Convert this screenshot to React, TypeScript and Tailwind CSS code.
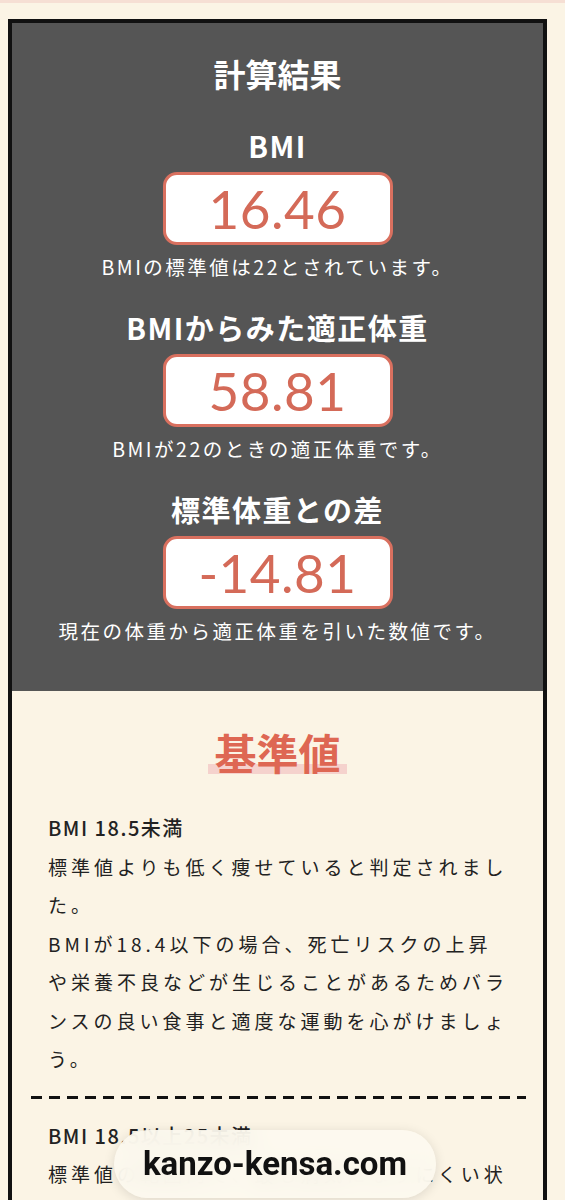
const jp = '[font-family:"Noto_Sans_CJK_JP","Noto_Sans",sans-serif]';

type Result = { title: string; value: string; note: string };

const results: Result[] = [
  { title: 'BMI', value: '16.46', note: 'BMIの標準値は22とされています。' },
  { title: 'BMIからみた適正体重', value: '58.81', note: 'BMIが22のときの適正体重です。' },
  { title: '標準体重との差', value: '-14.81', note: '現在の体重から適正体重を引いた数値です。' },
];

function ResultBlock({ r, first }: { r: Result; first: boolean }) {
  return (
    <div className={`flex flex-col items-center ${first ? 'mt-[29px]' : 'mt-[25px]'}`}>
      <h3 className="text-[29px] leading-[40px] font-bold tracking-[1.5px] text-white">{r.title}</h3>
      <div className="mt-[7px] flex h-[73px] w-[230px] items-center justify-center rounded-[14px] border-[3px] border-[#d9705f] bg-white">
        <span className="text-[53px] leading-none font-normal tracking-[0.5px] text-[#d46a58] [font-family:Lato,'Noto_Sans',sans-serif]">
          {r.value}
        </span>
      </div>
      <p className="mt-[7px] text-[19.5px] leading-[30px] tracking-[2.5px] text-white">{r.note}</p>
    </div>
  );
}

export default function App() {
  return (
    <div className={`min-h-screen bg-[#fbf4e5] ${jp}`}>
      <div className="h-[3px] bg-[#f6dfd4]" />
      <div className="mt-[16px] ml-[8px] mr-[18px] border-[4px] border-b-0 border-[#111]">
        {/* 計算結果 */}
        <section className="bg-[#555555] pt-[27px] pb-[45px]">
          <h2 className="text-center text-[32px] leading-[46px] font-bold text-white">計算結果</h2>
          {results.map((r, i) => (
            <ResultBlock key={r.title} r={r} first={i === 0} />
          ))}
        </section>

        {/* 基準値 */}
        <section className="bg-[#fbf4e5] pt-[34px] pb-[40px]">
          <div className="text-center">
            <span className="inline-block px-[6px] text-[42px] leading-[54px] font-bold text-[#de6753] bg-[linear-gradient(transparent_72%,#f5d2cd_72%,#f5d2cd_90%,transparent_90%)]">
              基準値
            </span>
          </div>

          <div className="mt-[30px] pl-[36px] pr-[30px] text-[19px] leading-[38.5px] tracking-[4px] text-[#222]">
            <p className="text-[20px] font-medium tracking-[1.5px]">BMI 18.5未満</p>
            <p>標準値よりも低く痩せていると判定されました。</p>
            <p>
              BMIが18.4以下の場合、死亡リスクの上昇や栄養不良などが生じることがあるためバランスの良い食事と適度な運動を心がけましょう。
            </p>
          </div>

          <div className="mt-[17px] ml-[19px] mr-[17px] h-[3px] bg-[repeating-linear-gradient(90deg,#111_0_11px,transparent_11px_18px)]" />

          <div className="mt-[18px] pl-[36px] pr-[30px] text-[19px] leading-[38.5px] tracking-[4px] text-[#222]">
            <p className="text-[20px] font-medium tracking-[1.5px]">BMI 18.5以上25未満</p>
            <p>標準値の範囲内で、最も病気になりにくい状態です。</p>
            <p>今の体重を維持できるよう、規則正しい生活を続けましょう。</p>
          </div>
        </section>
      </div>

      {/* browser address pill */}
      <div className="fixed bottom-[2px] left-[114px] flex h-[68px] w-[322px] items-center justify-center rounded-full bg-[#fdfaf0]/90 shadow-[0_2px_12px_rgba(0,0,0,0.12)] backdrop-blur-md">
        <span className="text-[33px] font-bold tracking-[0px] text-[#111] [font-family:Roboto,'Liberation_Sans',sans-serif]">
          kanzo-kensa.com
        </span>
      </div>
    </div>
  );
}
